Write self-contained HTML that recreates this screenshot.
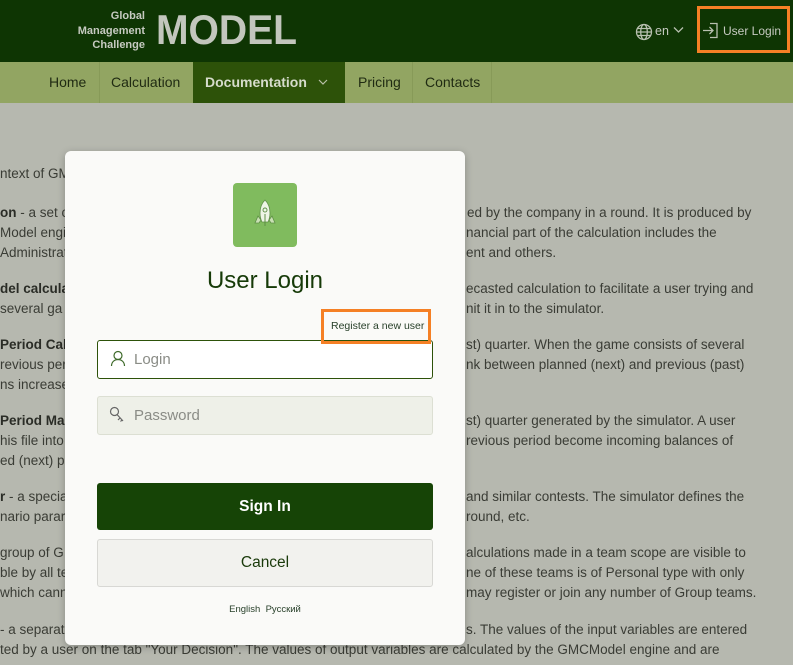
<!DOCTYPE html>
<html><head><meta charset="utf-8"><style>
*{margin:0;padding:0;box-sizing:border-box}
body{width:793px;height:665px;overflow:hidden;background:#b6b8af;font-family:"Liberation Sans",sans-serif;position:relative}
.hdr{position:absolute;left:0;top:0;width:793px;height:62px;background:#0e3503}
.nav{position:absolute;left:0;top:62px;width:793px;height:41px;background:#92a562}
.nav span{position:absolute;top:0;height:41px;line-height:41px;font-size:14px;color:#1f2a12}
.t{position:absolute;font-size:13.5px;color:#3a3c35;white-space:nowrap;line-height:20px}
.t b{color:#2a2c26}
.modal{position:absolute;left:65px;top:151px;width:400px;height:494px;background:#fafaf8;border-radius:6px;box-shadow:0 2px 8px rgba(0,0,0,.25)}
.abs{position:absolute}
</style></head><body>
<div class="hdr">
 <div class="abs" style="right:648px;top:9px;text-align:right;font-size:11px;font-weight:bold;color:#c6cac1;line-height:14.5px">Global<br>Management<br>Challenge</div>
 <div class="abs" style="left:156px;top:6px;font-size:42px;color:#c2c6bd;font-weight:bold;transform:scaleX(0.93);transform-origin:left">MODEL</div>
 <svg class="abs" style="left:635px;top:23px" width="18" height="18" viewBox="0 0 18 18" fill="none" stroke="#b8c0b0" stroke-width="1.3"><circle cx="9" cy="9" r="7.5"/><ellipse cx="9" cy="9" rx="3.3" ry="7.5"/><path d="M1.5 9h15M2.5 5.5h13M2.5 12.5h13"/></svg>
 <div class="abs" style="left:655px;top:24px;font-size:12.5px;color:#c6cac1">en</div>
 <svg class="abs" style="left:673px;top:26px" width="11" height="8" viewBox="0 0 11 8" fill="none" stroke="#b8c0b0" stroke-width="1.3"><path d="M1 1.5l4.5 4.5 4.5-4.5"/></svg>
 <div class="abs" style="left:697px;top:6px;width:93px;height:47px;border:3px solid #f58025"></div>
 <svg class="abs" style="left:702px;top:22px" width="17" height="17" viewBox="0 0 17 17" fill="none" stroke="#b8c0b0" stroke-width="1.3"><path d="M8 1.5h7v14H8M1 8.5h10M7.5 5l3.5 3.5-3.5 3.5"/></svg>
 <div class="abs" style="left:723px;top:24px;font-size:12px;color:#c6cac1">User Login</div>
</div>
<div class="nav">
 <span style="left:49px">Home</span>
 <div class="abs" style="left:99px;top:0;width:1px;height:41px;background:#879a58"></div>
 <span style="left:111px">Calculation</span>
 <div class="abs" style="left:193px;top:0;width:152px;height:41px;background:#2d5209"></div>
 <span style="left:205px;color:#d6dccc;font-weight:bold">Documentation</span>
 <svg class="abs" style="left:318px;top:17px" width="10" height="7" viewBox="0 0 10 7" fill="none" stroke="#b8c0a8" stroke-width="1.2"><path d="M1 1l4 4 4-4"/></svg>
 <span style="left:358px">Pricing</span>
 <div class="abs" style="left:412px;top:0;width:1px;height:41px;background:#879a58"></div>
 <span style="left:425px">Contacts</span>
 <div class="abs" style="left:491px;top:0;width:1px;height:41px;background:#879a58"></div>
</div>
<div class="t" style="left:0;top:164px">ntext of GM</div>
<div class="t" style="left:0;top:203px"><b>on</b> - a set o</div><div class="t" style="left:467px;top:203px">ed by the company in a round. It is produced by</div>
<div class="t" style="left:0;top:223px">Model engi</div><div class="t" style="left:466px;top:223px">nancial part of the calculation includes the</div>
<div class="t" style="left:0;top:243px">Administrat</div><div class="t" style="left:466px;top:243px">ent and others.</div>
<div class="t" style="left:0;top:279px"><b>del calcula</b></div><div class="t" style="left:466px;top:279px">ecasted calculation to facilitate a user trying and</div>
<div class="t" style="left:0;top:299px"> several ga</div><div class="t" style="left:466px;top:299px">nit it in to the simulator.</div>
<div class="t" style="left:0;top:335px"><b>Period Cal</b></div><div class="t" style="left:466px;top:335px">st) quarter. When the game consists of several</div>
<div class="t" style="left:0;top:355px">revious per</div><div class="t" style="left:466px;top:355px">nk between planned (next) and previous (past)</div>
<div class="t" style="left:0;top:375px">ns increase</div>
<div class="t" style="left:0;top:411px"><b>Period Ma</b></div><div class="t" style="left:466px;top:411px">st) quarter generated by the simulator. A user</div>
<div class="t" style="left:0;top:431px">his file into</div><div class="t" style="left:466px;top:431px">revious period become incoming balances of</div>
<div class="t" style="left:0;top:451px">ed (next) p</div>
<div class="t" style="left:0;top:487px"><b>r</b> - a specia</div><div class="t" style="left:466px;top:487px">and similar contests. The simulator defines the</div>
<div class="t" style="left:0;top:507px">nario parar</div><div class="t" style="left:466px;top:507px">round, etc.</div>
<div class="t" style="left:0;top:543px">group of G</div><div class="t" style="left:466px;top:543px">alculations made in a team scope are visible to</div>
<div class="t" style="left:0;top:563px">ble by all te</div><div class="t" style="left:466px;top:563px">ne of these teams is of Personal type with only</div>
<div class="t" style="left:0;top:583px">which cann</div><div class="t" style="left:466px;top:583px">may register or join any number of Group teams.</div>
<div class="t" style="left:0;top:620px">- a separate</div><div class="t" style="left:466px;top:620px">s. The values of the input variables are entered</div>
<div class="t" style="left:0;top:640px">ted by a user on the tab "Your Decision". The values of output variables are calculated by the GMCModel engine and are</div>
<div class="modal">
 <div class="abs" style="left:168px;top:32px;width:64px;height:64px;background:#80bb5e;border-radius:4px"></div>
 <svg class="abs" style="left:186px;top:47px" width="28" height="32" viewBox="0 0 28 32"><path d="M7 18l-3 7 4 0 2-3z M21 18l3 7-4 0-2-3z" fill="#c9e0b4" stroke="#5e8f46" stroke-width=".8"/><path d="M14 2c-4 4-5 9-5 13 0 4 1 7 2 9h6c1-2 2-5 2-9 0-4-1-9-5-13z" fill="#eef5e6" stroke="#5e8f46" stroke-width=".8"/><circle cx="14" cy="12" r="2" fill="none" stroke="#5e8f46" stroke-width=".9"/><path d="M14 16v12" stroke="#5e8f46" stroke-width="1"/></svg>
 <div class="abs" style="left:0;width:400px;top:116px;text-align:center;font-size:24px;color:#163a08">User Login</div>
 <div class="abs" style="left:32px;top:189px;width:336px;height:39px;border:1px solid #2d5209;border-radius:3px;background:#fff"></div>
 <svg class="abs" style="left:45px;top:199px" width="16" height="17" viewBox="0 0 16 17" fill="none" stroke="#3e6a2a" stroke-width="1.2"><circle cx="8" cy="5.5" r="4"/><path d="M1.5 16c0-4 3-6.5 6.5-6.5s6.5 2.5 6.5 6.5"/></svg>
 <div class="abs" style="left:69px;top:200px;font-size:15px;color:#8a8c86">Login</div>
 <div class="abs" style="left:256px;top:158px;width:110px;height:35px;border:3px solid #f58025"></div>
 <div class="abs" style="left:266px;top:169px;font-size:10.5px;color:#28402a">Register a new user</div>
 <div class="abs" style="left:32px;top:245px;width:336px;height:39px;border:1px solid #dcdfd3;border-radius:3px;background:#eef0e8"></div>
 <svg class="abs" style="left:44px;top:255px" width="16" height="17" viewBox="0 0 16 17" fill="none" stroke="#666" stroke-width="1.2"><circle cx="5.5" cy="5.5" r="4"/><path d="M8 8.5l6 6.5M11 12l-2 2M13 14l-1.5 1.5"/></svg>
 <div class="abs" style="left:69px;top:256px;font-size:15px;color:#8a8c86">Password</div>
 <div class="abs" style="left:32px;top:332px;width:336px;height:47px;background:#164406;border-radius:3px;color:#fff;font-weight:bold;font-size:15.5px;text-align:center;line-height:47px">Sign In</div>
 <div class="abs" style="left:32px;top:388px;width:336px;height:48px;background:#f2f2ee;border:1px solid #d8d8d4;border-radius:3px;color:#1a3a0a;font-size:15.5px;text-align:center;line-height:46px">Cancel</div>
 <div class="abs" style="left:0;width:400px;top:453px;text-align:center;font-size:9.5px;color:#28402a">English&nbsp; Русский</div>
</div>
</body></html>
